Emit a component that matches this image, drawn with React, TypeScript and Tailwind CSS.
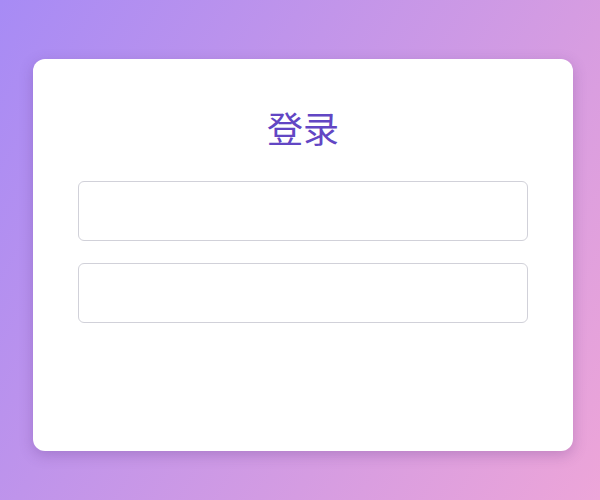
export default function App() {
  return (
    <div className="w-[600px] h-[500px] bg-[linear-gradient(120deg,#a78bf5,#eda5d8)] pl-[33px] pt-[59px]" style={{ fontFamily: '"Noto Sans", "Noto Sans CJK SC", sans-serif' }}>
      <div className="w-[540px] h-[392px] bg-white rounded-xl shadow-[0_4px_14px_rgba(80,40,120,0.25)] px-[45px] pt-[48px] flex flex-col">
        <h1 className="text-[36px] leading-[40px] text-center text-[#6246c4] mb-[34px]" style={{ fontFamily: '"Noto Sans CJK SC", sans-serif' }}>登录</h1>
        <input className="h-[60px] w-full border border-[#d1d1d9] rounded-md outline-none px-3" />
        <input type="password" className="h-[60px] w-full border border-[#d1d1d9] rounded-md outline-none px-3 mt-[22px]" />
      </div>
    </div>
  );
}
